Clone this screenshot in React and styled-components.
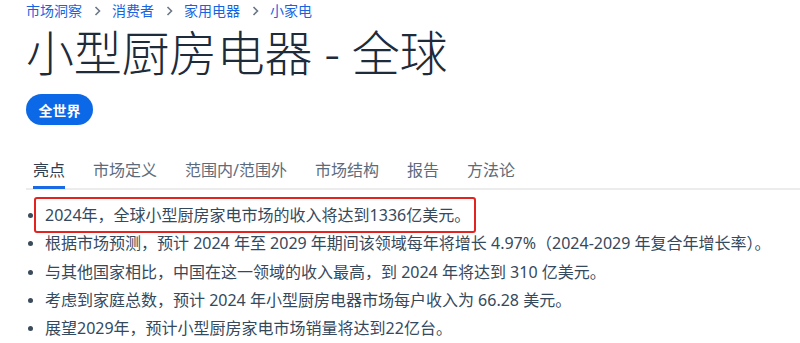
import React from "react";
import styled, { createGlobalStyle } from "styled-components";

const Global = createGlobalStyle`
  html, body { margin: 0; padding: 0; background: #fff; }
  body { font-family: "Noto Sans", "Noto Sans CJK SC", sans-serif; }
`;

const Page = styled.div`
  padding-left: 26px;
  width: 774px;
  height: 343px;
  overflow: hidden;
`;

const Crumbs = styled.nav`
  display: flex;
  align-items: center;
  height: 22px;
  font-size: 14px;
  line-height: 22px;
`;

const Crumb = styled.a`
  color: #1565e0;
  text-decoration: none;
`;

const Sep = styled.span`
  color: #6b7886;
  margin: 0 11px 0 12px;
  font-size: 13px;
  display: inline-flex;
  align-items: center;
`;

const Title = styled.h1`
  margin: 2px 0 0;
  font-size: 48px;
  line-height: 58px;
  font-weight: 300;
  color: #1d2b3a;
  letter-spacing: -0.3px;
`;

const Pill = styled.span`
  display: inline-flex;
  align-items: center;
  justify-content: center;
  margin-top: 12px;
  width: 67px;
  height: 31px;
  border-radius: 16px;
  background: #0b68e6;
  color: #fff;
  font-size: 14px;
  font-weight: 700;
`;

const Tabs = styled.div`
  display: flex;
  gap: 28px;
  margin-top: 33px;
  padding-left: 7px;
  border-bottom: 2px solid #ececec;
`;

const Tab = styled.div`
  font-size: 16px;
  line-height: 24px;
  padding-bottom: 4px;
  margin-bottom: -1px;
  color: ${(p) => (p.$active ? "#2d3e50" : "#5c6b7b")};
  border-bottom: 3px solid ${(p) => (p.$active ? "#1a6ae6" : "transparent")};
`;

const List = styled.ul`
  list-style: none;
  margin: 11px 0 0;
  padding: 0;
`;

const Item = styled.li`
  position: relative;
  padding-left: 19px;
  font-size: 16px;
  line-height: 28.3px;
  color: #35495d;
  white-space: nowrap;
  &::before {
    content: "";
    position: absolute;
    left: 2px;
    top: 12px;
    width: 5px;
    height: 5px;
    border-radius: 50%;
    background: #3a4b5c;
  }
`;

const Marked = styled.span`
  position: relative;
  &::after {
    content: "";
    position: absolute;
    left: -11px;
    right: -6px;
    top: -7px;
    bottom: -7px;
    border: 2.5px solid #e3231f;
    border-radius: 3px;
  }
`;

const Chevron = () => (
  <svg width="7" height="10" viewBox="0 0 7 10" fill="none">
    <path d="M1.5 1l4 4-4 4" stroke="#6b7886" strokeWidth="1.6" />
  </svg>
);

const crumbs = ["市场洞察", "消费者", "家用电器", "小家电"];
const tabs = ["亮点", "市场定义", "范围内/范围外", "市场结构", "报告", "方法论"];
const items = [
  "根据市场预测，预计 2024 年至 2029 年期间该领域每年将增长 4.97%（2024-2029 年复合年增长率）。",
  "与其他国家相比，中国在这一领域的收入最高，到 2024 年将达到 310 亿美元。",
  "考虑到家庭总数，预计 2024 年小型厨房电器市场每户收入为 66.28 美元。",
  "展望2029年，预计小型厨房家电市场销量将达到22亿台。",
];

export default function App() {
  return (
    <Page>
      <Global />
      <Crumbs>
        {crumbs.map((c, i) => (
          <React.Fragment key={c}>
            {i > 0 && (
              <Sep>
                <Chevron />
              </Sep>
            )}
            <Crumb href="#">{c}</Crumb>
          </React.Fragment>
        ))}
      </Crumbs>
      <Title>小型厨房电器 - 全球</Title>
      <Pill>全世界</Pill>
      <Tabs>
        {tabs.map((t, i) => (
          <Tab key={t} $active={i === 0}>
            {t}
          </Tab>
        ))}
      </Tabs>
      <List>
        <Item>
          <Marked>2024年，全球小型厨房家电市场的收入将达到1336亿美元。</Marked>
        </Item>
        {items.map((t) => (
          <Item key={t}>{t}</Item>
        ))}
      </List>
    </Page>
  );
}
